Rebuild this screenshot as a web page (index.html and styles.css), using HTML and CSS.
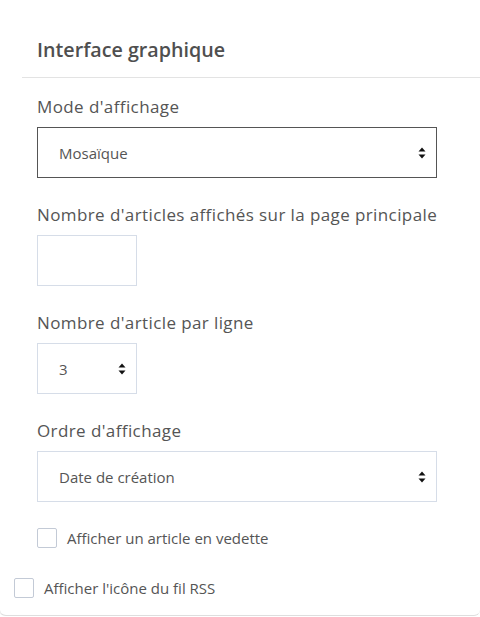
FILE: index.html
```html
<!DOCTYPE html>
<html lang="fr">
<head>
<meta charset="utf-8">
<title>Interface graphique</title>
<link rel="stylesheet" href="styles.css">
</head>
<body>
<div class="card">
  <div class="card-header">
    <h2 class="card-title">Interface graphique</h2>
  </div>
  <div class="card-body">
    <div class="field">
      <label class="field-label">Mode d'affichage</label>
      <div class="select-wrap select-wide select-focus">
        <select class="select"><option>Mosaïque</option></select>
        <svg class="select-arrows" width="8" height="12" viewBox="0 0 8 12"><path d="M4 0.5 L7.5 4.5 L0.5 4.5 Z M4 11.5 L7.5 7.5 L0.5 7.5 Z" fill="#111"/></svg>
      </div>
    </div>
    <div class="field">
      <label class="field-label">Nombre d'articles affichés sur la page principale</label>
      <input class="input input-small" type="text">
    </div>
    <div class="field">
      <label class="field-label">Nombre d'article par ligne</label>
      <div class="select-wrap select-small">
        <select class="select"><option>3</option></select>
        <svg class="select-arrows" width="8" height="12" viewBox="0 0 8 12"><path d="M4 0.5 L7.5 4.5 L0.5 4.5 Z M4 11.5 L7.5 7.5 L0.5 7.5 Z" fill="#111"/></svg>
      </div>
    </div>
    <div class="field">
      <label class="field-label">Ordre d'affichage</label>
      <div class="select-wrap select-wide">
        <select class="select"><option>Date de création</option></select>
        <svg class="select-arrows" width="8" height="12" viewBox="0 0 8 12"><path d="M4 0.5 L7.5 4.5 L0.5 4.5 Z M4 11.5 L7.5 7.5 L0.5 7.5 Z" fill="#111"/></svg>
      </div>
    </div>
    <label class="check">
      <span class="check-box"></span>
      <span class="check-label">Afficher un article en vedette</span>
    </label>
  </div>
  <label class="check check-outer">
    <span class="check-box"></span>
    <span class="check-label">Afficher l'icône du fil RSS</span>
  </label>
</div>
</body>
</html>
```
FILE: styles.css
```css
html, body {
  margin: 0;
  padding: 0;
  background: #fff;
}
body {
  font-family: "Open Sans", "Lato", sans-serif;
  color: #555;
  width: 480px;
  height: 617px;
  overflow: hidden;
}
.card {
  box-sizing: border-box;
  width: 480px;
  height: 616px;
  border-bottom: 1px solid #dedede;
  border-radius: 0 0 6px 6px;
  box-shadow: -1px 0 0 #eee;
  background: #fff;
}
.card-header {
  margin-left: 22px;
  border-bottom: 1px solid #e3e3e3;
  padding: 38px 0 15px 15px;
}
.card-title {
  margin: 0;
  font-size: 19.7px;
  line-height: 24px;
  font-weight: 600;
  color: #4f4f4f;
}
.card-body {
  padding: 18px 43px 0 37px;
}
.field {
  margin-bottom: 26px;
}
.field-label {
  display: block;
  font-size: 17px;
  line-height: 22px;
  letter-spacing: 0.4px;
  margin-bottom: 9px;
  color: #555;
  white-space: nowrap;
}
.select-wrap {
  position: relative;
  box-sizing: border-box;
  height: 51px;
  border: 1px solid #d6dde8;
  background: #fff;
}
.select-wide { width: 400px; }
.select-small { width: 100px; }
.select-focus { border-color: #555; }
.select {
  appearance: none;
  -webkit-appearance: none;
  border: 0;
  outline: 0;
  background: transparent;
  width: 100%;
  height: 100%;
  padding: 0 0 0 21px;
  font-family: inherit;
  font-size: 15px;
  color: #555;
}
.select-arrows {
  position: absolute;
  right: 10px;
  top: 19px;
}
.input {
  display: block;
  box-sizing: border-box;
  border: 1px solid #d6dde8;
  height: 51px;
  outline: 0;
  font-family: inherit;
}
.input-small { width: 100px; }
.check {
  display: flex;
  align-items: center;
  gap: 10px;
}
.check-box {
  box-sizing: border-box;
  width: 20px;
  height: 20px;
  border: 1px solid #c3cad6;
  border-radius: 2px;
  background: #fff;
}
.check-label {
  font-size: 15px;
  line-height: 20px;
  color: #555;
}
.check-outer {
  margin: 30px 0 0 14px;
}
```
